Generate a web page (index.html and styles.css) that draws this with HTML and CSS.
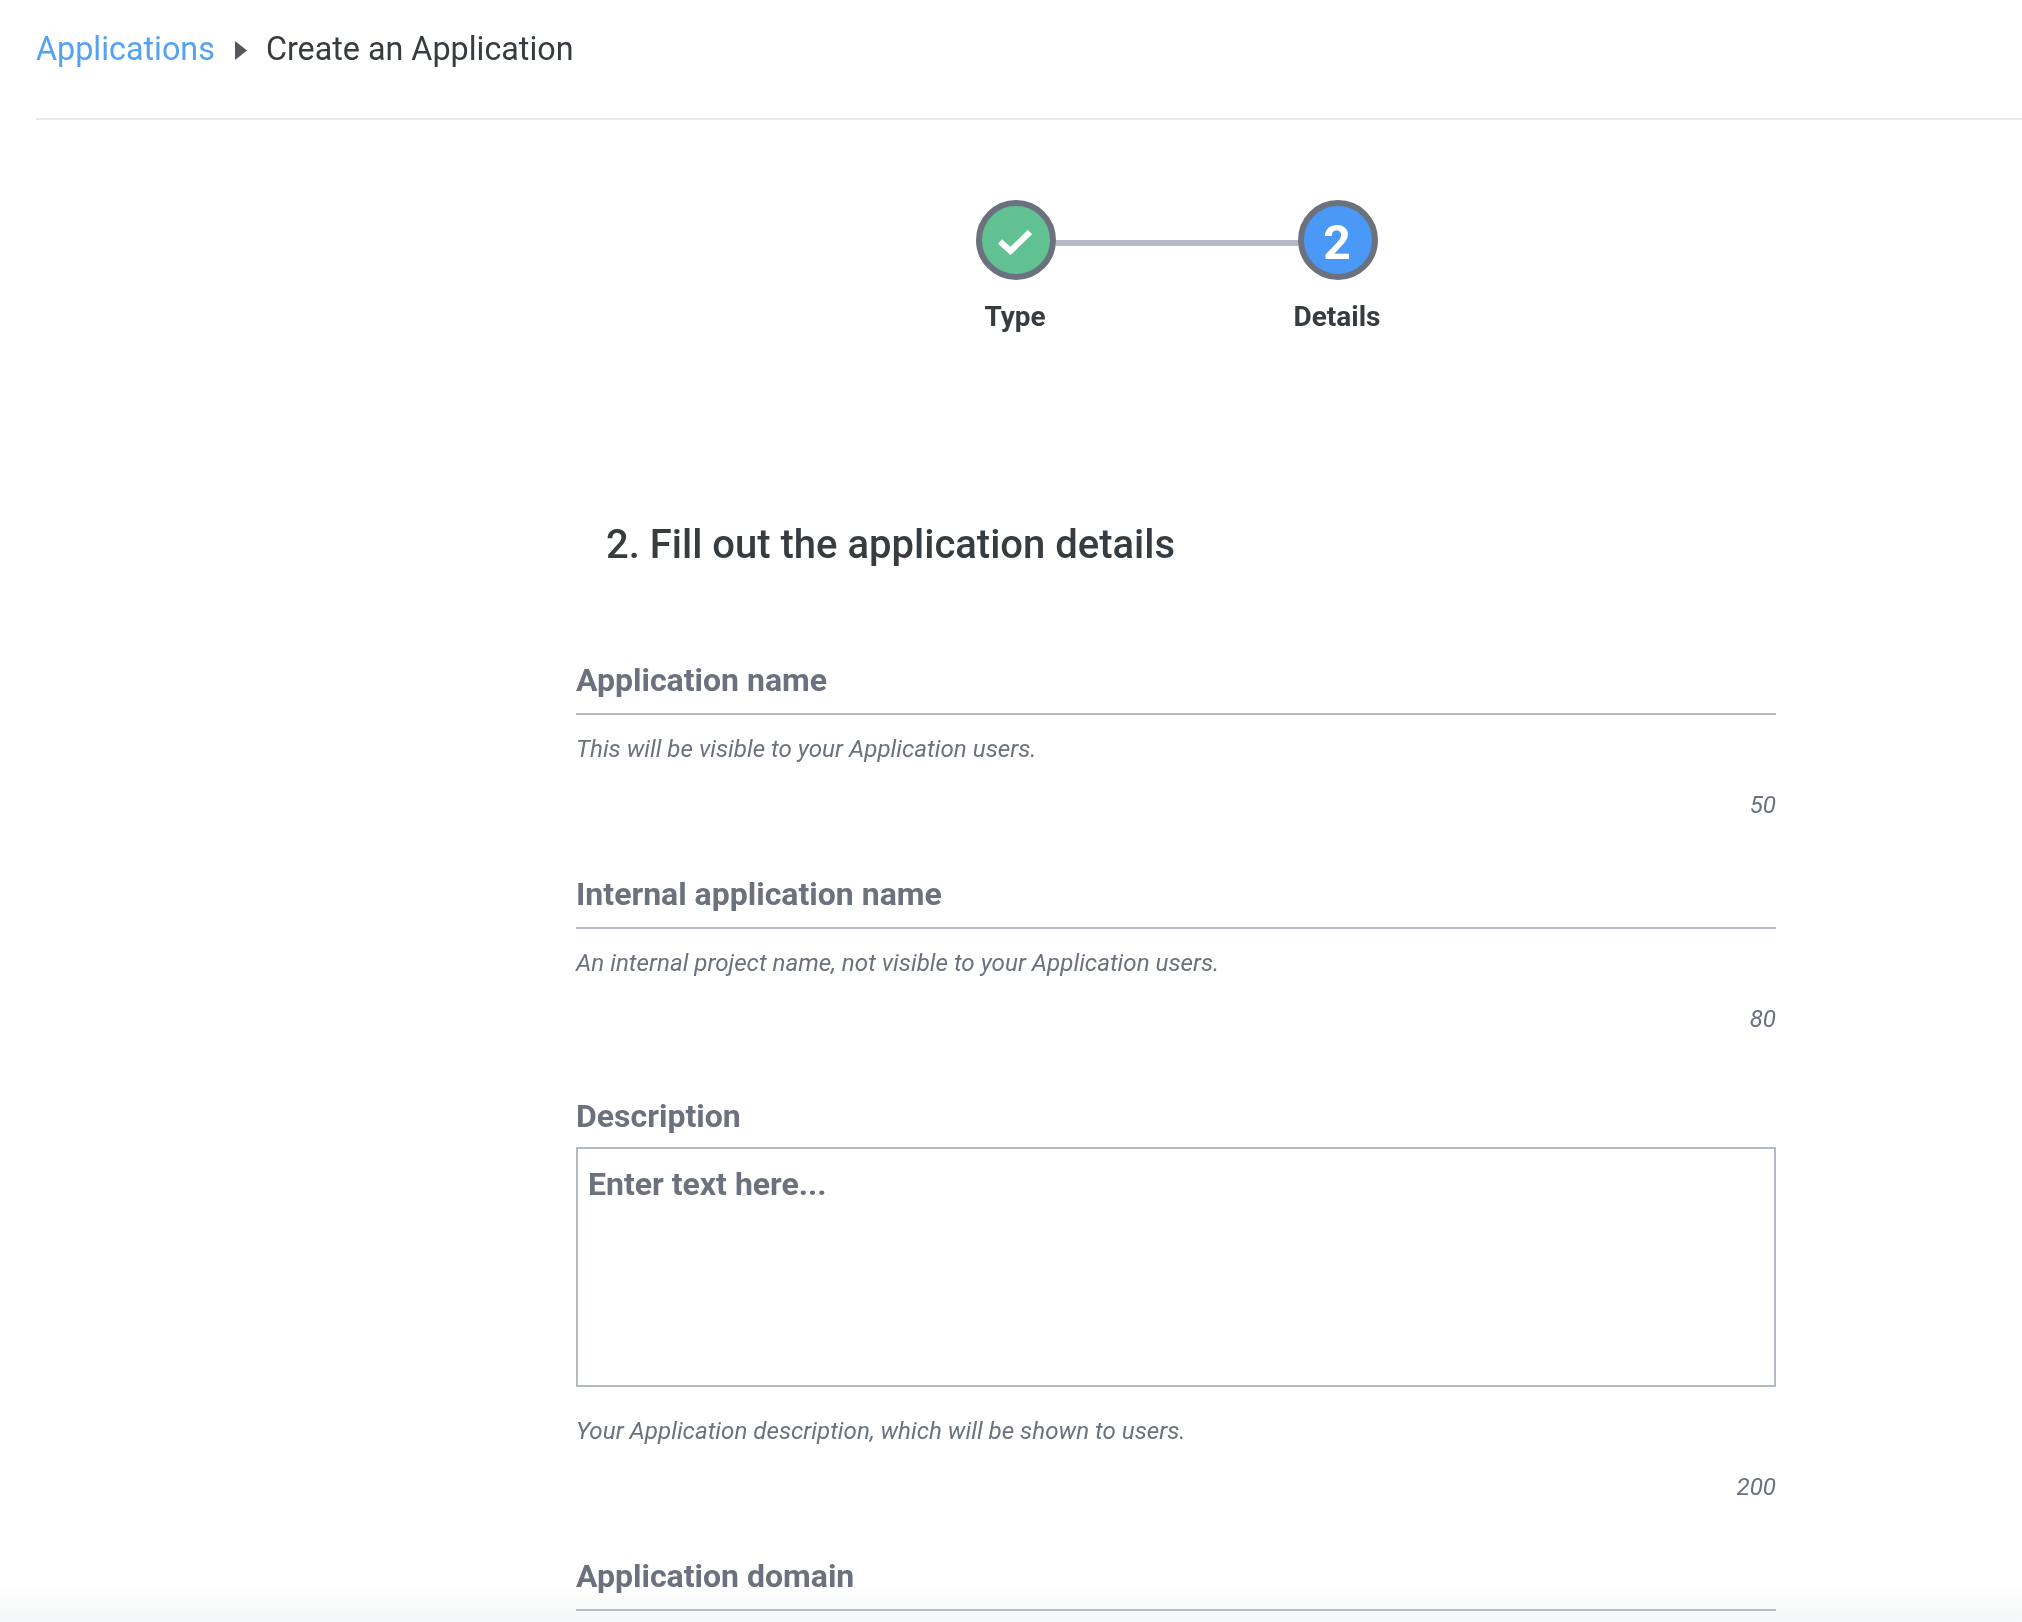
FILE: index.html
```html
<!DOCTYPE html>
<html lang="en">
<head>
<meta charset="utf-8">
<title>Create an Application</title>
<link rel="stylesheet" href="styles.css">
</head>
<body>
<div class="page">
  <nav class="crumbs">
    <a class="crumb-link">Applications</a>
    <svg class="crumb-sep" width="12" height="19" viewBox="0 0 12 19"><path d="M0 0 12 9.500 0 19z" fill="#54585c"/></svg>
    <span class="crumb-current">Create an Application</span>
  </nav>
  <main class="content">
    <div class="stepper">
      <div class="step">
        <div class="dot dot-done">
          <svg class="check" width="36" height="28" viewBox="0 0 36 28"><path d="M3 14.500 13.500 24 33 5" fill="none" stroke="#fff" stroke-width="6"/></svg>
        </div>
        <div class="step-label">Type</div>
      </div>
      <div class="connector"></div>
      <div class="step">
        <div class="dot dot-active"><span class="dot-num">2</span></div>
        <div class="step-label">Details</div>
      </div>
    </div>
    <form class="form">
      <h2 class="title">2. Fill out the application details</h2>
      <div class="field field-first">
        <label class="label label-line">Application name</label>
        <p class="hint">This will be visible to your Application users.</p>
        <div class="count">50</div>
      </div>
      <div class="field">
        <label class="label label-line">Internal application name</label>
        <p class="hint">An internal project name, not visible to your Application users.</p>
        <div class="count">80</div>
      </div>
      <div class="field field-area">
        <label class="label">Description</label>
        <div class="textarea">Enter text here...</div>
        <p class="hint hint-area">Your Application description, which will be shown to users.</p>
        <div class="count">200</div>
      </div>
      <div class="field">
        <label class="label label-line">Application domain</label>
      </div>
    </form>
  </main>
</div>
<div class="fade"></div>
</body>
</html>
```
FILE: styles.css
```css
* { box-sizing: border-box; }
html, body { margin: 0; height: 100%; overflow: hidden; background: #fff; }
body { font-family: Roboto, "Liberation Sans", sans-serif; color: #373c41; }
.page { padding-left: 36px; position: relative; z-index: 1; }
.crumbs {
  height: 120px;
  border-bottom: 2px solid #e8e9ea;
  display: flex;
  align-items: center;
  padding-bottom: 20px;
  font-size: 32.3px;
}
.crumb-link { color: #55a2f2; }
.crumb-sep { margin: 2px 20px 0 20px; }
.crumb-current { color: #373c41; margin-left: -1px; }
.content { margin-left: 540px; width: 1200px; }
.stepper {
  display: flex;
  justify-content: center;
  align-items: flex-start;
  padding-top: 80px;
  padding-left: 2px;
}
.step { width: 80px; display: flex; flex-direction: column; align-items: center; }
.dot {
  width: 80px; height: 80px; border-radius: 50%;
  border: 6px solid #6b727d;
  display: flex; align-items: center; justify-content: center;
  color: #fff; font-size: 48px; font-weight: 700;
}
.dot-num { position: relative; top: 2px; left: -1px; }
.check { position: relative; left: -1px; top: 1px; }
.dot-done { background: #62c193; }
.dot-active { background: #4b99f6; }
.step-label { margin-top: 19px; margin-right: 2px; font-size: 28px; font-weight: 700; line-height: 36px; white-space: nowrap; }
.connector { width: 242px; height: 6px; margin-top: 40px; background: #b3bac3; }
.form { padding-top: 185px; }
.title { margin: 0 0 0 30px; font-size: 40px; font-weight: 500; line-height: 50px; }
.field { color: #6b727d; margin-top: 54px; }
.field-first { margin-top: 90px; }
.field-area { margin-top: 62px; }
.label { display: block; font-size: 32px; font-weight: 700; line-height: 40px; }
.label-line { border-bottom: 2px solid #b3bac3; padding-bottom: 13px; }
.hint { margin: 19px 0 0; font-size: 24.2px; font-style: italic; line-height: 30px; }
.count { margin-top: 26px; text-align: right; font-size: 24.2px; font-style: italic; line-height: 30px; }
.textarea {
  height: 240px; margin-top: 11px;
  border: 2px solid #b3bac3;
  padding: 15px 10px;
  font-size: 32px; font-weight: 700; line-height: 40px;
}
.hint-area { margin-top: 29px; }
.fade {
  position: fixed; left: 0; right: 0; bottom: 0; height: 36px;
  background: linear-gradient(to bottom, rgba(245,246,247,0), rgba(245,246,247,1));
}
```
